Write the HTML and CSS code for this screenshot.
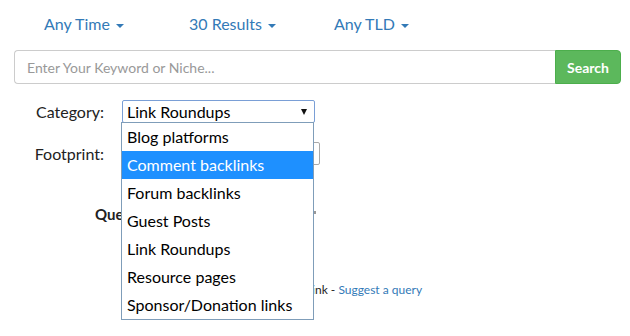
FILE: index.html
```html
<!DOCTYPE html>
<html lang="en">

<head>
    <meta charset="UTF-8">
    <meta name="viewport" content="width=device-width, initial-scale=1.0">
    <title>footprints</title>
    <link rel="stylesheet" href="styles.css">
</head>

<body>
    <div class="filters">
        <a class="filter" href="#">Any Time <span class="caret"></span></a>
        <a class="filter" href="#">30 Results <span class="caret"></span></a>
        <a class="filter" href="#">Any TLD <span class="caret"></span></a>
    </div>
    <div class="searchBox">
        <input class="keyword" placeholder="Enter Your Keyword or Niche...">
        <button class="searchBtn">Search</button>
    </div>
    <div class="form">
        <label class="label">Category:</label>
        <div class="field">
            <div class="select focus">Link Roundups<span class="arrow"></span></div>
            <ul class="options">
                <li>Blog platforms</li>
                <li class="active">Comment backlinks</li>
                <li>Forum backlinks</li>
                <li>Guest Posts</li>
                <li>Link Roundups</li>
                <li>Resource pages</li>
                <li>Sponsor/Donation links</li>
            </ul>
        </div>
        <label class="label">Footprint:</label>
        <div class="field">
            <div class="select wide"></div>
        </div>
        <label class="label query">Query:</label>
        <div class="field">
            <div class="queryBox"><span class="help"></span></div>
        </div>
    </div>
    <div class="links">
        <span>Report a broken link - </span><a href="#">Suggest a query</a>
    </div>
</body>

</html>
```

FILE: styles.css
```css
html,
body {
    min-height: 100vh;
}

body {
    margin: 0;
    font-family: Lato, "Open Sans", sans-serif;
    color: #222;
    background: #fff;
}

.filters {
    display: flex;
    padding: 14px 0 0 44px;
    height: 20px;
}

.filter {
    width: 145px;
    font-size: 16px;
    line-height: 20px;
    color: #337ab7;
    text-decoration: none;
}

.caret {
    display: inline-block;
    width: 0;
    height: 0;
    margin-left: 2px;
    vertical-align: middle;
    border-top: 4px solid #337ab7;
    border-left: 4px solid transparent;
    border-right: 4px solid transparent;
}

.searchBox {
    display: flex;
    margin: 16px 9px 0 14px;
    height: 34px;
}

.keyword {
    flex: 1;
    box-sizing: border-box;
    height: 34px;
    border: 1px solid #ccc;
    border-right: none;
    border-radius: 4px 0 0 4px;
    padding: 0 12px;
    font-family: Lato, sans-serif;
    font-size: 14px;
    color: #555;
    outline: none;
}

.keyword::placeholder {
    color: #999;
}

.searchBtn {
    width: 66px;
    height: 34px;
    border: 1px solid #4cae4c;
    border-radius: 0 4px 4px 0;
    background: #5cb85c;
    color: #fff;
    font-family: Lato, sans-serif;
    font-size: 14px;
    font-weight: bold;
    padding: 0;
}

.form {
    display: grid;
    grid-template-columns: 104px auto;
    column-gap: 18px;
    row-gap: 19px;
    margin-top: 16px;
    align-items: center;
}

.label {
    text-align: right;
    font-size: 16px;
}

.label.query {
    text-align: left;
    white-space: nowrap;
    margin: 20px 0 0 95px;
    font-size: 15px;
    font-weight: bold;
}

.field {
    position: relative;
}

.select {
    box-sizing: border-box;
    position: relative;
    width: 193px;
    height: 23px;
    border: 1px solid #a9a9a9;
    border-radius: 2px;
    padding-left: 4px;
    font-size: 16px;
    line-height: 21px;
    color: #000;
    background: #fff;
}

.select.focus {
    border-color: #7a9fd6;
}

.select.wide {
    width: 198px;
}

.arrow {
    position: absolute;
    right: 7px;
    top: 8px;
    border-top: 6px solid #111;
    border-left: 3px solid transparent;
    border-right: 3px solid transparent;
}

.queryBox {
    position: relative;
    margin-top: 20px;
    height: 20px;
}

.help {
    position: absolute;
    left: 192px;
    top: 7px;
    width: 2px;
    height: 3px;
    background: #999;
}

.options {
    position: absolute;
    top: 22px;
    left: -1px;
    width: 191px;
    margin: 0;
    padding: 0;
    list-style: none;
    border: 1px solid #7f9db9;
    background: #fff;
    z-index: 10;
}

.options>li {
    height: 28px;
    line-height: 28px;
    padding-left: 5px;
    font-size: 16px;
    color: #000;
}

.options>li.active {
    background: #1e90ff;
    color: #fff;
}

.links {
    margin-top: 58px;
    padding-left: 222px;
    font-size: 12px;
    line-height: 16px;
    color: #222;
}

.links>a {
    color: #337ab7;
    text-decoration: none;
}
```
